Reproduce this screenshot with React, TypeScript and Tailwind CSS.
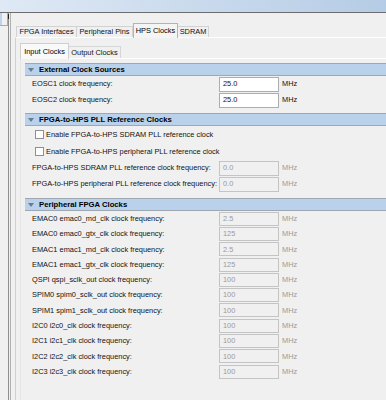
import React from "react";

const periph: [string, string][] = [
  ["EMAC0 emac0_md_clk clock frequency:", "2.5"],
  ["EMAC0 emac0_gtx_clk clock frequency:", "125"],
  ["EMAC1 emac1_md_clk clock frequency:", "2.5"],
  ["EMAC1 emac1_gtx_clk clock frequency:", "125"],
  ["QSPI qspi_sclk_out clock frequency:", "100"],
  ["SPIM0 spim0_sclk_out clock frequency:", "100"],
  ["SPIM1 spim1_sclk_out clock frequency:", "100"],
  ["I2C0 i2c0_clk clock frequency:", "100"],
  ["I2C1 i2c1_clk clock frequency:", "100"],
  ["I2C2 i2c2_clk clock frequency:", "100"],
  ["I2C3 i2c3_clk clock frequency:", "100"],
];

function Header({ title }: { title: string }) {
  return (
    <div className="h-[13px] flex items-center border-y border-[#9fa7b1] bg-[#b9d1ea]">
      <span className="ml-[3px] w-0 h-0 border-l-[3px] border-r-[3px] border-t-[4px] border-l-transparent border-r-transparent border-t-[#6b7c92]" />
      <span className="ml-[5px] font-bold text-[7.7px] leading-none text-[#000]">{title}</span>
    </div>
  );
}

function Row({
  label,
  value,
  disabled,
  h,
  ih,
}: {
  label: string;
  value: string;
  disabled?: boolean;
  h: string;
  ih: string;
}) {
  return (
    <div className={`flex items-center pl-[7px] ${h}`}>
      <span className="w-[187px] shrink-0 whitespace-nowrap text-[#111]">{label}</span>
      <div
        className={`w-[60px] ${ih} flex items-center pl-[3px] border ${
          disabled ? "border-[#c4c4c4] bg-[#f0f0f0] text-[#9a9a9a]" : "border-[#abadb3] bg-white text-[#111]"
        }`}
      >
        {value}
      </div>
      <span className={`ml-[3px] ${disabled ? "text-[#9a9a9a]" : "text-[#111]"}`}>MHz</span>
    </div>
  );
}

function Check({ label, h }: { label: string; h: string }) {
  return (
    <div className={`flex items-center pl-[10px] ${h}`}>
      <span className="w-[9px] h-[9px] border border-[#8f8f8f] bg-white shrink-0" />
      <span className="ml-[2px] whitespace-nowrap text-[#111]">{label}</span>
    </div>
  );
}

export default function App() {
  return (
    <div className="w-[386px] h-[400px] overflow-hidden bg-[#f0f0f0] flex flex-col font-['Liberation_Sans',Arial,sans-serif] text-[7.4px] leading-none">
      <div className="h-[12px] shrink-0 bg-linear-to-r from-[#dfe9f5] to-[#b5cce6]" />
      <div className="h-px shrink-0 bg-[#6c6c6c]" />
      <div className="flex flex-1 min-h-0">
        {/* left gutter */}
        <div className="w-[8px] shrink-0 flex flex-col">
          <div className="h-[13px] flex border-b border-r border-[#a9a9a9]">
            <div className="w-[2px] bg-[#bcd4ee]" />
          </div>
        </div>
        <div className="w-px shrink-0 bg-[#8e8e8e] flex flex-col">
          <div className="mt-[1px] h-[5px] bg-[#222]" />
        </div>
        <div className="w-px shrink-0 bg-[#f0f0f0]" />
        <div className="w-px shrink-0 bg-[#b0b0b0]" />
        {/* main */}
        <div className="flex-1 min-w-0 pl-[4px] pt-[10px] flex flex-col">
          <div className="flex items-end h-[14px] ml-[1px] relative z-10">
            <div className="w-[61px] h-[11px] border border-b-0 border-[#d2d2d2] flex items-center justify-center text-[#111]">
              FPGA Interfaces
            </div>
            <div className="w-[56px] h-[11px] border border-b-0 border-l-0 border-[#d2d2d2] flex items-center justify-center text-[#111]">
              Peripheral Pins
            </div>
            <div className="w-[45px] h-[15px] -mb-px border border-b-0 border-[#b4b4b4] bg-[#f4f4f4] flex items-center justify-center text-[#000]">
              HPS Clocks
            </div>
            <div className="w-[31px] h-[11px] border border-b-0 border-l-0 border-[#d2d2d2] flex items-center justify-center text-[#111]">
              SDRAM
            </div>
          </div>
          <div className="flex-1 border-t border-l border-t-white border-l-[#d0d0d0] pl-[4px] pt-[5px] flex flex-col">
            <div className="flex items-end h-[15px] relative z-10">
              <div className="w-[49px] h-[16px] -mb-px border border-b-0 border-[#cfcfcf] bg-[#f9f9f9] flex items-center justify-center text-[#000]">
                Input Clocks
              </div>
              <div className="w-[52px] h-[12px] border border-b-0 border-l-0 border-[#d6d6d6] flex items-center justify-center text-[#111]">
                Output Clocks
              </div>
            </div>
            <div className="flex-1 border-t border-l border-t-white border-l-[#e4e4e4] pl-[4px] pt-[4px] flex flex-col">
              <Header title="External Clock Sources" />
              <Row label="EOSC1 clock frequency:" value="25.0" h="h-[16px]" ih="h-[15px]" />
              <Row label="EOSC2 clock frequency:" value="25.0" h="h-[16px]" ih="h-[15px]" />
              <div className="mt-[5px]">
                <Header title="FPGA-to-HPS PLL Reference Clocks" />
              </div>
              <Check label="Enable FPGA-to-HPS SDRAM PLL reference clock" h="h-[17px]" />
              <Check label="Enable FPGA-to-HPS peripheral PLL reference clock" h="h-[17px]" />
              <Row label="FPGA-to-HPS SDRAM PLL reference clock frequency:" value="0.0" disabled h="h-[16px]" ih="h-[15px]" />
              <Row label="FPGA-to-HPS peripheral PLL reference clock frequency:" value="0.0" disabled h="h-[16px]" ih="h-[15px]" />
              <div className="mt-[6px]">
                <Header title="Peripheral FPGA Clocks" />
              </div>
              {periph.map(([l, v]) => (
                <Row key={l} label={l} value={v} disabled h="h-[15.3px]" ih="h-[14px]" />
              ))}
            </div>
          </div>
        </div>
      </div>
    </div>
  );
}
